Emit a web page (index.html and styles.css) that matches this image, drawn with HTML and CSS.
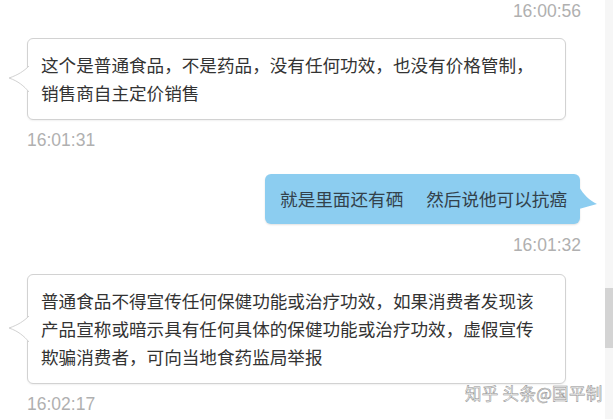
FILE: index.html
```html
<!DOCTYPE html>
<html lang="zh">
<head>
    <meta charset="UTF-8">
    <title>聊天记录</title>
    <link rel="stylesheet" href="styles.css">
</head>
<body>
    <div class="chat">
        <div class="time right">16:00:56</div>

        <div class="msg left first">
            <div class="bubble">
                <svg class="tail" width="21" height="28" viewBox="0 0 21 28">
                    <path d="M21 1 C16 6 10 10 1 13 C10 16 16 21 21 27" fill="#fff" stroke="#d2d2d2" stroke-width="1"/>
                </svg>
                这个是普通食品，不是药品，没有任何功效，也没有价格管制，销售商自主定价销售
            </div>
        </div>
        <div class="time after-left">16:01:31</div>

        <div class="msg right mine">
            <div class="bubble blue">
                <svg class="tail-r" width="19" height="23" viewBox="0 0 19 23">
                    <path d="M0 0 C5 8 10 13 18 17 C12 19 6 20 0 22 Z" fill="#8ccdf0"/>
                </svg>
                就是里面还有硒<span class="gap"></span>然后说他可以抗癌
            </div>
        </div>
        <div class="time right after-right">16:01:32</div>

        <div class="msg left last">
            <div class="bubble">
                <svg class="tail" width="21" height="28" viewBox="0 0 21 28">
                    <path d="M21 1 C16 6 10 10 1 13 C10 16 16 21 21 27" fill="#fff" stroke="#d2d2d2" stroke-width="1"/>
                </svg>
                普通食品不得宣传任何保健功能或治疗功效，如果消费者发现该产品宣称或暗示具有任何具体的保健功能或治疗功效，虚假宣传欺骗消费者，可向当地食药监局举报
            </div>
        </div>
        <div class="time after-left">16:02:17</div>
    </div>

    <div class="watermark">知乎 头条@国平制</div>
    <div class="scroll-track"><div class="scroll-thumb"></div></div>
</body>
</html>
```

FILE: styles.css
```css
html, body {
    margin: 0;
    padding: 0;
    background: #fff;
    overflow: hidden;
}
body {
    width: 613px;
    height: 419px;
    position: relative;
    font-family: "Noto Sans CJK SC", sans-serif;
}
.chat {
    padding: 0 32px 0 27px;
}
.time {
    font-family: "Liberation Sans", Arial, sans-serif;
    font-size: 17.5px;
    color: #b0b0b0;
    height: 22px;
    line-height: 22px;
}
.time.right {
    text-align: right;
}
.time.after-left {
    margin-top: 9px;
}
.time.after-right {
    margin-top: 10px;
}
.msg {
    display: flex;
}
.msg.left {
    justify-content: flex-start;
}
.msg.right {
    justify-content: flex-end;
}
.msg.first {
    margin-top: 16px;
}
.msg.mine {
    margin-top: 23px;
    margin-right: 1px;
}
.msg.last {
    margin-top: 18px;
}
.bubble {
    position: relative;
    box-sizing: border-box;
    width: 539px;
    padding: 12px 26px 12px 13px;
    border: 1px solid #d2d2d2;
    border-radius: 6px;
    background: #fff;
    box-shadow: 0 1px 2px rgba(0, 0, 0, 0.06);
    font-size: 17.6px;
    line-height: 28px;
    color: #333;
}
.bubble.blue {
    width: auto;
    border: none;
    background: #8ccdf0;
    padding: 11px 13px 11px 15px;
    color: #33414b;
    box-shadow: 0 1px 2px rgba(0, 0, 0, 0.12);
}
.gap {
    display: inline-block;
    width: 23px;
}
.tail {
    position: absolute;
    left: -20px;
    top: 50%;
    margin-top: -14px;
}
.tail-r {
    position: absolute;
    right: -18px;
    top: 13px;
}
.watermark {
    position: absolute;
    left: 465px;
    top: 381px;
    font-size: 16.5px;
    letter-spacing: 0.3px;
    color: #f4f4f4;
    -webkit-text-stroke: 0.5px #8e8e8e;
}
.scroll-track {
    position: absolute;
    right: 0;
    top: 0;
    width: 8px;
    height: 419px;
    background: #f6f6f6;
}
.scroll-thumb {
    margin-top: 288px;
    height: 60px;
    background: #d4d4d4;
}
```
